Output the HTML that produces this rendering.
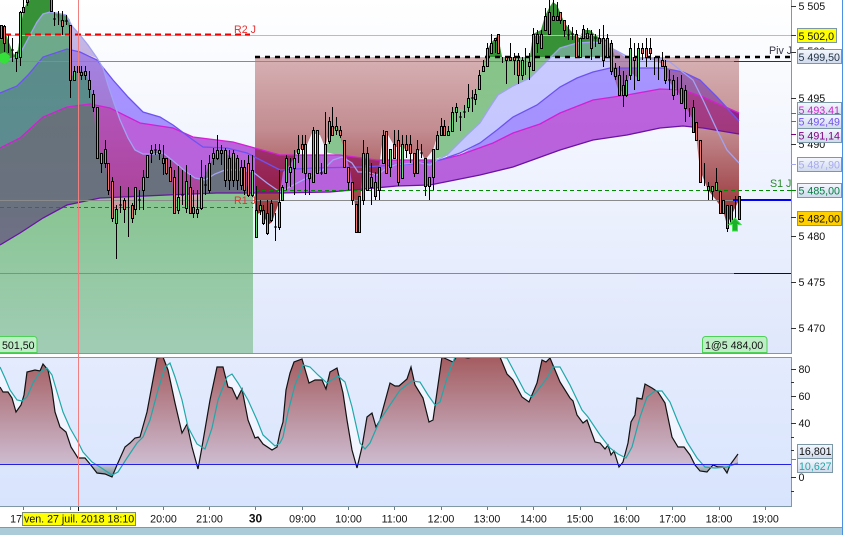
<!DOCTYPE html>
<html><head><meta charset="utf-8"><style>
html,body{margin:0;padding:0;background:#fff;width:843px;height:535px;overflow:hidden}
svg{display:block;position:absolute;left:0;top:0}
text{font-family:"Liberation Sans",sans-serif;font-size:10.67px;fill:#111}
</style></head><body>
<svg width="843" height="535" viewBox="0 0 843 535" xmlns="http://www.w3.org/2000/svg">
<defs>
<linearGradient id="bgM" gradientUnits="userSpaceOnUse" x1="0" y1="0" x2="0" y2="353"><stop offset="0" stop-color="#fff"/><stop offset="1" stop-color="#dfe7fc"/></linearGradient>
<linearGradient id="bgS" gradientUnits="userSpaceOnUse" x1="0" y1="357" x2="0" y2="506"><stop offset="0" stop-color="#e4ebfd"/><stop offset="1" stop-color="#d8e4fd"/></linearGradient>
<linearGradient id="grn" gradientUnits="userSpaceOnUse" x1="0" y1="60" x2="0" y2="353"><stop offset="0" stop-color="#008200" stop-opacity=".46"/><stop offset=".5" stop-color="#008800" stop-opacity=".42"/><stop offset="1" stop-color="#008800" stop-opacity=".28"/></linearGradient>
<linearGradient id="brn" gradientUnits="userSpaceOnUse" x1="0" y1="40" x2="0" y2="235"><stop offset="0" stop-color="#820000" stop-opacity=".22"/><stop offset=".1" stop-color="#820000" stop-opacity=".3"/><stop offset=".46" stop-color="#820000" stop-opacity=".43"/><stop offset=".82" stop-color="#820000" stop-opacity=".72"/><stop offset="1" stop-color="#820000" stop-opacity=".88"/></linearGradient>
<linearGradient id="brnL" gradientUnits="userSpaceOnUse" x1="0" y1="40" x2="0" y2="235"><stop offset="0" stop-color="#900000" stop-opacity=".1"/><stop offset=".5" stop-color="#900000" stop-opacity=".2"/><stop offset=".8" stop-color="#900000" stop-opacity=".3"/><stop offset="1" stop-color="#820000" stop-opacity=".6"/></linearGradient>
<linearGradient id="osc" gradientUnits="userSpaceOnUse" x1="0" y1="357" x2="0" y2="464"><stop offset="0" stop-color="#a45c60"/><stop offset="1" stop-color="#cdbcd0"/></linearGradient>
<linearGradient id="osd" gradientUnits="userSpaceOnUse" x1="0" y1="464" x2="0" y2="477"><stop offset="0" stop-color="#c4ccd6"/><stop offset="1" stop-color="#778490"/></linearGradient>
<linearGradient id="lab" x1="0" y1="0" x2="0" y2="1"><stop offset="0" stop-color="#f4f7fe"/><stop offset="1" stop-color="#cfdaec"/></linearGradient>
<clipPath id="abv"><polygon points="70,0 70,78 78,70 85,72 90,85 93,100 97,150 105,155 108,185 112,205 116,212 124,205 130,205 135,195 140,190 147,165 155,150 163,155 170,170 174,195 182,205 190,205 197,207 201,185 209,165 217,153 225,153 233,158 241,172 248,190 253,195 253,0"/></clipPath>
<clipPath id="pan"><rect x="0" y="357" width="791" height="149"/></clipPath>
<clipPath id="up"><rect x="0" y="357" width="791" height="107"/></clipPath>
<clipPath id="dn"><rect x="0" y="464" width="791" height="42"/></clipPath>
</defs>

<rect x="0" y="0" width="791" height="353" fill="url(#bgM)"/>

<!-- MA fills -->
<polygon fill="#5a5aff" fill-opacity=".3" points="0,60 10,59 17,57 22,50 30,35 37,22 43,14 50,12 57,13 66,15 72,26 80,35 88,45 97,58 80,52 67,49 43,57 28,75 17,86 0,93"/>
<polygon fill="#5a5aff" fill-opacity=".3" points="447,155 457,145 467,135 480,123 490,107 498,95 513,86 530,78 543,65 560,48 577,43 593,42 603,43 615,50 630,58 650,58 660,58 663,68 643,68 610,68 593,72 577,78 560,87 537,105 513,117 497,130 480,143 460,153 447,158"/>
<polygon fill="#552dff" fill-opacity=".5" points="0,93 17,86 28,75 43,57 67,49 80,52 97,60 113,80 128,97 143,112 160,117 173,125 180,130 173,128 140,123 110,108 90,104 67,107 43,117 20,138 0,148"/>
<polygon fill="#552dff" fill-opacity=".5" points="460,155 480,143 497,130 513,117 537,105 560,87 577,78 593,72 610,68 643,68 663,68 683,72 700,80 717,97 739,121 739,113 703,97 683,90 660,89 627,95 593,100 560,113 540,124 513,133 493,143"/>
<polygon fill="#9300c5" fill-opacity=".6" points="0,148 20,138 43,117 67,107 90,104 110,108 140,123 173,128 193,137 233,142 280,155 340,155 377,160 440,160 460,155 493,143 513,133 540,124 560,113 593,100 627,95 660,89 683,90 703,97 739,113 739,134 703,128 683,126 660,128 627,135 593,140 560,150 513,167 480,175 430,185 397,186 330,192 280,193 217,193 167,195 100,198 67,205 43,218 20,233 0,245"/>

<!-- green overlays -->
<polygon fill="url(#grn)" points="0,40 4,28 8,40 14,55 18,50 20,35 23,12 27,2 30,0 50,0 52,10 60,22 66,22 70,30 70,78 78,70 85,72 90,85 93,100 97,150 105,155 108,185 112,205 116,212 124,205 130,205 135,195 140,190 147,165 155,150 163,155 170,170 174,195 182,205 190,205 197,207 201,185 209,165 217,153 225,153 233,158 241,172 248,190 253,195 253,353 0,353"/>
<polygon fill="#006f00" fill-opacity=".6" points="0,60 0,40 4,28 8,40 14,55 18,50 20,35 23,12 27,2 30,0 50,0 52,10 60,22 66,22 70,30 70,20 66,15 57,13 50,12 43,14 37,22 30,35 22,50 17,57 10,59"/>
<polygon fill="url(#grn)" points="433,160 437,137 441,128 448,131 452,113 456,108 464,110 468,98 475,95 479,76 483,66 487,50 491,43 498,35 502,57 530,57 533,34 541,30 545,16 549,8 553,2 557,5 560,12 564,22 570,30 576,36 580,38 583,30 590,30 595,35 600,38 607,40 611,45 615,57 550,57 543,65 530,78 513,86 498,95 490,107 480,123 467,135 457,145 447,155"/>
<polygon fill="#006f00" fill-opacity=".6" points="487,57 487,50 491,43 498,35 502,57 530,57 533,34 541,30 545,16 549,8 553,2 557,5 560,12 564,22 570,30 576,36 580,38 583,30 590,30 595,35 600,38 607,40 603,43 593,42 577,43 560,48 550,57"/>
<polygon fill="url(#grn)" points="325,152 332,127 338,127 343,145 346,157"/>

<!-- brown overlays -->
<polygon clip-path="url(#abv)" fill="url(#brnL)" points="70,20 72,26 80,35 88,45 97,58 103,68 108,85 114,103 120,120 128,138 135,150 143,154 155,154 163,153 172,160 185,171 195,178 205,180 215,174 225,170 240,170 253,172 253,260 70,260"/>
<polygon fill="url(#brn)" points="255,57 486,57 483,66 479,76 475,95 468,98 464,110 456,108 452,113 448,131 441,128 437,137 433,150 425,160 420,150 415,155 402,147 395,147 388,135 383,137 378,175 370,175 363,160 360,210 355,205 350,170 343,145 337,128 330,130 325,147 320,135 312,133 306,147 298,150 290,165 283,172 278,205 272,222 268,225 262,212 255,215"/>
<polygon fill="url(#brn)" points="607,45 615,50 625,57 739,57 739,200 735,208 727,225 723,210 716,200 708,190 700,170 696,135 693,120 685,105 677,90 669,82 662,64 654,60 646,58 640,60 638,78 630,72 626,90 619,92 611,68"/>

<!-- MA lines -->
<g fill="none" stroke-width="1.3">
<polyline stroke="#6a12a6" points="0,245 20,233 43,218 67,205 100,198 167,195 217,193 280,193 330,192 397,186 430,185 480,175 513,167 560,150 593,140 627,135 660,128 683,126 703,128 739,134"/>
<polyline stroke="#d41fd4" points="0,148 20,138 43,117 67,107 90,104 110,108 140,123 173,128 193,137 233,142 280,155 340,155 377,160 440,160 460,155 493,143 513,133 540,124 560,113 593,100 627,95 660,89 683,90 703,97 739,113"/>
<polyline stroke="#6d52f2" points="0,93 17,86 28,75 43,57 67,49 80,52 97,60 113,80 128,97 143,112 160,117 173,125 193,140 203,147 227,148 247,153 280,170 313,168 363,167 397,165 423,163 440,160 460,153 480,143 497,130 513,117 537,105 560,87 577,78 593,72 610,68 643,68 663,68 683,72 700,80 717,97 739,121"/>
<polyline stroke="#a2a2f4" points="0,60 10,59 17,57 22,50 30,35 37,22 43,14 50,12 57,13 66,15 72,26 80,35 88,45 97,58 103,68 108,85 114,103 120,120 128,138 135,150 143,154 155,154 163,153 172,160 185,171 195,178 205,180 215,174 225,170 240,170 253,172 267,183 280,192 303,180 323,170 333,160 342,157 352,163 358,172 367,172 377,175 387,168 395,165 413,163 420,163 430,165 437,160 447,155 457,145 467,135 480,123 490,107 498,95 513,86 530,78 543,65 560,48 577,43 593,42 603,43 615,50 630,58 650,58 660,58 670,62 680,70 693,80 703,100 717,130 727,150 739,163"/>
</g>

<!-- horizontal lines -->
<line x1="0" x2="791" y1="35.5" y2="35.5" stroke="#f2a4a4"/>
<line x1="5" x2="250" y1="34.5" y2="34.5" stroke="#f00000" stroke-width="2" stroke-dasharray="6 4"/>
<line x1="0" x2="791" y1="61.5" y2="61.5" stroke="#8a8a8a"/>
<line x1="734" x2="791" y1="61.5" y2="61.5" stroke="#8b1010"/>
<line x1="255" x2="791" y1="57" y2="57" stroke="#000" stroke-width="2.5" stroke-dasharray="5 5"/>
<line x1="0" x2="791" y1="200.5" y2="200.5" stroke="#8a8a8a"/>
<line x1="255" x2="791" y1="190.5" y2="190.5" stroke="#008a00" stroke-dasharray="4 3"/>
<line x1="0" x2="253" y1="207.5" y2="207.5" stroke="#e02020" stroke-dasharray="4 3"/>
<line x1="0" x2="734" y1="273.5" y2="273.5" stroke="#8a8a8a"/>
<line x1="734" x2="791" y1="273.5" y2="273.5" stroke="#111"/>
<line x1="733" x2="791" y1="200" y2="200" stroke="#0000f0" stroke-width="2"/>

<text x="234" y="33" style="fill:#e83030">R2 J</text>
<text x="234" y="204" style="fill:#e83030">R1 J</text>
<text x="770" y="187" style="fill:#2a8a2a">S1 J</text>
<text x="769" y="54" style="fill:#334">Piv J</text>

<!-- candle wicks -->
<path fill="none" stroke="#000" d="M4.5 25V58M8.5 35V53M12.5 38V62M11 50h3M16.5 52V72M20.5 11V66M23.5 0V12M27.5 0V6M51.5 0V12M54.5 12V26M53 19h3M58.5 11V25M62.5 11V35M66.5 15V25M65 21h3M70.5 25V98M74.5 66V80M78.5 57V75M81.5 66V80M85.5 66V80M89.5 71V98M93.5 90V112M97.5 107V158M101.5 153V173M105.5 140V168M108.5 163V195M112.5 177V222M116.5 205V259M120.5 186V213M119 205h3M124.5 198V223M128.5 187V237M132.5 203V223M135.5 187V215M139.5 190V210M138 200h3M143.5 170V210M147.5 155V177M151.5 145V163M155.5 144V155M154 150h3M159.5 144V160M163.5 145V175M166.5 158V175M170.5 160V181M174.5 170V213M178.5 166V214M182.5 170V205M181 195h3M186.5 165V213M190.5 175V213M193.5 190V218M197.5 190V218M201.5 160V210M205.5 165V195M204 185h3M209.5 155V193M213.5 148V165M217.5 135V160M221.5 145V165M225.5 148V187M229.5 150V190M233.5 150V187M237.5 155V190M241.5 160V190M244.5 160V195M248.5 155V197M252.5 155V197M256.5 186V237M260.5 200V215M263.5 205V225M267.5 200V235M271.5 200V222M275.5 213V241M274 227h3M279.5 170V230M282.5 185V200M286.5 155V190M290.5 158V187M294.5 150V195M298.5 135V163M302.5 135V173M305.5 135V195M309.5 173V195M313.5 127V182M317.5 130V173M321.5 163V175M320 173h3M325.5 112V173M329.5 117V144M332.5 107V135M336.5 117V135M340.5 126V138M344.5 140V167M348.5 167V190M352.5 182V205M363.5 140V205M367.5 147V190M371.5 163V205M375.5 172V200M379.5 167V200M383.5 130V163M386.5 131V173M390.5 149V177M394.5 130V158M398.5 130V186M402.5 135V178M406.5 135V158M410.5 135V163M414.5 153V177M417.5 140V173M421.5 144V158M420 153h3M425.5 158V196M429.5 177V200M433.5 149V190M437.5 131V149M441.5 118V135M444.5 120V135M448.5 126V135M452.5 107V131M456.5 103V122M460.5 112V131M459 117h3M464.5 105V118M463 112h3M468.5 84V112M472.5 90V112M471 98h3M475.5 89V105M479.5 70V89M483.5 60V71M487.5 43V66M491.5 34V53M495.5 38V53M498.5 34V53M502.5 57V63M506.5 57V84M510.5 43V60M514.5 53V75M518.5 53V84M522.5 57V80M525.5 48V75M529.5 53V80M533.5 28V70M537.5 30V53M541.5 30V48M545.5 8V30M549.5 0V34M553.5 0V20M557.5 2V20M560.5 12V24M564.5 20V37M568.5 25V40M567 35h3M572.5 27V40M571 34h3M576.5 30V57M580.5 38V57M583.5 25V38M587.5 28V38M591.5 30V60M595.5 34V47M594 38h3M599.5 29V43M603.5 25V67M607.5 34V57M611.5 40V75M615.5 63V80M619.5 66V95M623.5 71V107M626.5 75V97M630.5 38V80M634.5 43V90M638.5 43V80M642.5 43V60M646.5 38V67M650.5 38V60M654.5 57V75M658.5 57V80M662.5 52V66M665.5 60V84M669.5 70V90M668 80h3M673.5 75V100M677.5 77V95M681.5 75V103M685.5 85V122M689.5 108V117M693.5 100V132M696.5 122V140M700.5 140V182M704.5 163V186M708.5 182V200M712.5 186V200M716.5 168V190M720.5 191V213M723.5 200V213M727.5 205V232M731.5 205V222M735.5 196V222M739.5 196V219"/>
<!-- red bodies -->
<path fill="#f2736e" stroke="#000" d="M.5 25.5h2v13h-2zM3.5 26.5h2v17h-2zM26.5 -.5h2v3h-2zM50.5 -.5h2v12h-2zM61.5 20.5h2v6h-2zM69.5 25.5h2v55h-2zM77.5 66.5h2v6h-2zM80.5 72.5h2v3h-2zM84.5 71.5h2v4h-2zM88.5 80.5h2v9h-2zM92.5 94.5h2v13h-2zM96.5 107.5h2v51h-2zM104.5 149.5h2v14h-2zM107.5 163.5h2v27h-2zM111.5 181.5h2v37h-2zM123.5 200.5h2v9h-2zM131.5 205.5h2v13h-2zM162.5 158.5h2v5h-2zM165.5 158.5h2v15h-2zM169.5 167.5h2v14h-2zM173.5 177.5h2v36h-2zM189.5 187.5h2v26h-2zM192.5 207.5h2v6h-2zM220.5 150.5h2v3h-2zM228.5 158.5h2v22h-2zM236.5 158.5h2v22h-2zM243.5 167.5h2v23h-2zM247.5 163.5h2v32h-2zM262.5 210.5h2v13h-2zM270.5 203.5h2v17h-2zM301.5 144.5h2v5h-2zM308.5 173.5h2v5h-2zM331.5 126.5h2v9h-2zM339.5 130.5h2v5h-2zM343.5 140.5h2v27h-2zM347.5 167.5h2v15h-2zM351.5 182.5h2v18h-2zM355.5 204.5h2v28h-2zM370.5 177.5h2v10h-2zM374.5 182.5h2v14h-2zM385.5 131.5h2v42h-2zM393.5 144.5h2v14h-2zM397.5 140.5h2v42h-2zM405.5 144.5h2v6h-2zM409.5 144.5h2v9h-2zM413.5 153.5h2v20h-2zM424.5 158.5h2v28h-2zM443.5 126.5h2v9h-2zM494.5 38.5h2v2h-2zM497.5 34.5h2v19h-2zM505.5 57.5h2v3h-2zM509.5 57.5h2v3h-2zM513.5 57.5h2v3h-2zM517.5 60.5h2v15h-2zM528.5 62.5h2v4h-2zM536.5 34.5h2v9h-2zM552.5 16.5h2v4h-2zM556.5 16.5h2v4h-2zM559.5 12.5h2v8h-2zM563.5 20.5h2v10h-2zM575.5 34.5h2v23h-2zM586.5 33.5h2v5h-2zM590.5 34.5h2v14h-2zM598.5 38.5h2v5h-2zM610.5 43.5h2v28h-2zM614.5 68.5h2v8h-2zM618.5 75.5h2v20h-2zM622.5 85.5h2v10h-2zM633.5 57.5h2v3h-2zM641.5 48.5h2v5h-2zM645.5 48.5h2v9h-2zM649.5 48.5h2v5h-2zM661.5 60.5h2v6h-2zM664.5 66.5h2v14h-2zM672.5 80.5h2v15h-2zM680.5 88.5h2v15h-2zM684.5 90.5h2v18h-2zM692.5 107.5h2v25h-2zM695.5 122.5h2v18h-2zM699.5 140.5h2v42h-2zM719.5 191.5h2v22h-2zM726.5 205.5h2v23h-2zM738.5 196.5h2v23h-2z"/>
<!-- green bodies -->
<path fill="#5bdc6c" stroke="#000" d="M358.5 196.5h2v36h-2zM15.5 52.5h2v6h-2zM19.5 12.5h2v45h-2zM22.5 7.5h2v5h-2zM73.5 71.5h2v9h-2zM100.5 153.5h2v10h-2zM115.5 209.5h2v14h-2zM134.5 187.5h2v22h-2zM142.5 177.5h2v13h-2zM146.5 155.5h2v22h-2zM150.5 150.5h2v3h-2zM158.5 150.5h2v3h-2zM177.5 197.5h2v13h-2zM185.5 181.5h2v27h-2zM196.5 209.5h2v4h-2zM200.5 177.5h2v31h-2zM208.5 163.5h2v27h-2zM212.5 153.5h2v5h-2zM216.5 150.5h2v8h-2zM224.5 150.5h2v30h-2zM232.5 153.5h2v27h-2zM240.5 167.5h2v18h-2zM251.5 170.5h2v25h-2zM255.5 210.5h2v27h-2zM259.5 205.5h2v5h-2zM266.5 213.5h2v20h-2zM278.5 202.5h2v25h-2zM281.5 187.5h2v13h-2zM285.5 158.5h2v24h-2zM289.5 167.5h2v5h-2zM293.5 158.5h2v10h-2zM297.5 149.5h2v4h-2zM304.5 144.5h2v29h-2zM312.5 130.5h2v52h-2zM316.5 130.5h2v43h-2zM324.5 144.5h2v29h-2zM328.5 121.5h2v20h-2zM335.5 126.5h2v4h-2zM362.5 153.5h2v47h-2zM366.5 153.5h2v37h-2zM378.5 167.5h2v23h-2zM382.5 135.5h2v28h-2zM389.5 149.5h2v18h-2zM401.5 144.5h2v34h-2zM416.5 149.5h2v24h-2zM428.5 177.5h2v9h-2zM432.5 149.5h2v28h-2zM436.5 135.5h2v14h-2zM440.5 126.5h2v9h-2zM447.5 131.5h2v4h-2zM451.5 112.5h2v19h-2zM455.5 107.5h2v5h-2zM467.5 98.5h2v9h-2zM474.5 94.5h2v5h-2zM478.5 75.5h2v14h-2zM482.5 66.5h2v5h-2zM486.5 48.5h2v18h-2zM490.5 43.5h2v10h-2zM521.5 60.5h2v15h-2zM532.5 34.5h2v36h-2zM540.5 34.5h2v14h-2zM544.5 16.5h2v14h-2zM548.5 12.5h2v22h-2zM579.5 38.5h2v19h-2zM582.5 29.5h2v9h-2zM602.5 38.5h2v22h-2zM606.5 38.5h2v19h-2zM625.5 80.5h2v15h-2zM629.5 48.5h2v27h-2zM637.5 48.5h2v32h-2zM707.5 186.5h2v4h-2zM711.5 186.5h2v5h-2zM715.5 182.5h2v8h-2zM722.5 200.5h2v13h-2zM730.5 205.5h2v17h-2z"/>

<!-- arrows -->
<polygon fill="#1fae2c" stroke="#3fe24a" points="735,218 741,224.5 737.5,224.5 737.5,231 732.5,231 732.5,224.5 729,224.5"/>
<polygon fill="#35e03a" points="0,54 5,52 10,56 9,61 5,64 0,62"/>

<!-- main frame -->
<rect x="0" y="353" width="792" height="1" fill="#7f9aa5"/>
<rect x="791" y="0" width="1" height="354" fill="#7f9aa5"/>

<!-- labels on chart -->
<path d="M-2 336.5H34a3 3 0 0 1 3 3V352.5H-2z" fill="#bdeec6" stroke="#4fd058"/>
<text x="2" y="349">501,50</text>
<path d="M705.5 336.5H764a3 3 0 0 1 3 3V352.5H702.5V339.5a3 3 0 0 1 3-3z" fill="#bdeec6" stroke="#4fd058"/>
<text x="705" y="349">1@5 484,00</text>

<!-- sub panel -->
<rect x="0" y="357" width="791" height="149" fill="url(#bgS)"/>
<g clip-path="url(#pan)">
<polygon clip-path="url(#up)" fill="#f4f6ff" fill-opacity=".9" points="0,367 5,378 10,390 17,400 22,401 27,397 33,383 40,372 47,368 52,375 57,392 63,412 70,428 78,442 83,452 92,462 100,467 112,475 118,472 127,458 137,443 143,437 150,420 158,390 165,367 170,363 175,377 182,400 188,427 197,444 205,449 212,428 218,400 227,377 232,374 238,383 248,400 257,420 263,435 275,446 280,443 283,437 288,412 295,385 303,365 310,367 318,375 327,383 338,376 345,382 352,407 360,443 365,449 370,443 380,420 390,405 400,390 412,381 420,382 428,395 435,405 440,402 447,378 455,357 500,357 507,358 515,373 525,392 532,397 538,390 547,378 553,367 560,367 570,385 582,410 588,417 600,435 610,448 618,454 626,458 632,447 640,417 647,397 655,391 662,391 670,402 678,422 687,442 697,458 705,467 715,468 727,467 738,463 738,464 0,464"/>
<polygon clip-path="url(#up)" fill="url(#osc)" points="0,387 3,392 8,392 12,398 16,412 21,405 24,395 27,372 35,370 40,371 43,364 48,370 52,390 55,412 60,427 66,432 71,447 78,458 85,458 90,464 97,473 105,474 112,477 117,465 125,447 130,443 135,438 140,437 147,412 152,385 157,358 163,357 168,370 175,403 182,433 187,424 192,447 198,469 202,447 210,400 217,367 223,367 228,387 232,388 237,399 242,389 248,420 255,438 258,437 263,444 272,450 277,447 280,432 283,422 286,390 290,373 294,362 302,359 309,383 315,380 322,380 326,389 330,372 337,368 343,393 347,420 352,450 357,468 362,447 367,417 372,413 376,427 380,420 390,383 395,386 399,386 407,379 411,367 415,385 423,398 429,422 433,420 442,357 453,362 457,356 468,358 477,356 500,357 507,374 513,380 522,397 529,402 537,383 542,360 546,362 550,358 560,382 570,398 573,401 577,415 583,423 587,420 595,442 600,443 605,449 608,445 611,455 614,451 619,467 623,462 628,443 631,422 635,415 637,398 642,399 645,384 652,388 658,392 665,403 672,437 678,447 684,447 690,455 695,465 700,471 707,472 713,465 718,467 723,467 727,473 730,465 738,454 738,464 0,464"/>
<polygon clip-path="url(#dn)" fill="url(#osd)" points="90,464 97,473 105,474 112,477 117,465 117,464"/>
<polygon clip-path="url(#dn)" fill="url(#osd)" points="695,464 700,471 707,472 713,465 718,467 723,467 727,473 730,465 731,464"/>
<polyline fill="none" stroke="#111" stroke-width="1.2" points="0,387 3,392 8,392 12,398 16,412 21,405 24,395 27,372 35,370 40,371 43,364 48,370 52,390 55,412 60,427 66,432 71,447 78,458 85,458 90,464 97,473 105,474 112,477 117,465 125,447 130,443 135,438 140,437 147,412 152,385 157,358 163,357 168,370 175,403 182,433 187,424 192,447 198,469 202,447 210,400 217,367 223,367 228,387 232,388 237,399 242,389 248,420 255,438 258,437 263,444 272,450 277,447 280,432 283,422 286,390 290,373 294,362 302,359 309,383 315,380 322,380 326,389 330,372 337,368 343,393 347,420 352,450 357,468 362,447 367,417 372,413 376,427 380,420 390,383 395,386 399,386 407,379 411,367 415,385 423,398 429,422 433,420 442,357 453,362 457,356 468,358 477,356 500,357 507,374 513,380 522,397 529,402 537,383 542,360 546,362 550,358 560,382 570,398 573,401 577,415 583,423 587,420 595,442 600,443 605,449 608,445 611,455 614,451 619,467 623,462 628,443 631,422 635,415 637,398 642,399 645,384 652,388 658,392 665,403 672,437 678,447 684,447 690,455 695,465 700,471 707,472 713,465 718,467 723,467 727,473 730,465 738,454"/>
<polyline fill="none" stroke="#1fa8a8" stroke-width="1.2" points="0,367 5,378 10,390 17,400 22,401 27,397 33,383 40,372 47,368 52,375 57,392 63,412 70,428 78,442 83,452 92,462 100,467 112,475 118,472 127,458 137,443 143,437 150,420 158,390 165,367 170,363 175,377 182,400 188,427 197,444 205,449 212,428 218,400 227,377 232,374 238,383 248,400 257,420 263,435 275,446 280,443 283,437 288,412 295,385 303,365 310,367 318,375 327,383 338,376 345,382 352,407 360,443 365,449 370,443 380,420 390,405 400,390 412,381 420,382 428,395 435,405 440,402 447,378 455,357 500,357 507,358 515,373 525,392 532,397 538,390 547,378 553,367 560,367 570,385 582,410 588,417 600,435 610,448 618,454 626,458 632,447 640,417 647,397 655,391 662,391 670,402 678,422 687,442 697,458 705,467 715,468 727,467 738,463"/>
</g>
<line x1="0" x2="791" y1="464.5" y2="464.5" stroke="#2222e0"/>
<rect x="0" y="357" width="792" height="1" fill="#7f9aa5"/>
<rect x="0" y="506" width="792" height="1" fill="#7f9aa5"/>
<rect x="791" y="357" width="1" height="150" fill="#7f9aa5"/>

<!-- vertical crosshair -->
<line x1="78.5" x2="78.5" y1="0" y2="506" stroke="#f08080"/>

<!-- price axis ticks -->
<path fill="none" stroke="#333" d="M791 6.5h5M791 35.5h5M791 52.5h5M791 98.5h5M791 144.5h5M791 217.5h5M791 236.5h5M791 282.5h5M791 328.5h5M791 369.5h5M791 382.5h3M791 396.5h5M791 409.5h3M791 423.5h5M791 437.5h3M791 450.5h3M791 477.5h5M791 491.5h3"/>
<path fill="none" d="M791 113.5h5" stroke="#d020d0"/>
<path fill="none" d="M791 121.5h5" stroke="#7050f0"/>
<path fill="none" d="M791 134.5h5" stroke="#800080"/>
<path fill="none" d="M791 164.5h5" stroke="#a8a8f0"/>
<path fill="none" d="M791 190.5h5" stroke="#008a00"/>
<path fill="none" d="M791 459.5h5" stroke="#1fa8a8"/>

<text x="798.5" y="10">5 505</text>
<text x="798.5" y="55">5 500</text>
<text x="798.5" y="102">5 495</text>
<text x="798.5" y="148">5 490</text>
<text x="798.5" y="240">5 480</text>
<text x="798.5" y="286">5 475</text>
<text x="798.5" y="332">5 470</text>
<text x="798.5" y="373">80</text>
<text x="798.5" y="400">60</text>
<text x="798.5" y="427">40</text>
<text x="798.5" y="481">0</text>

<!-- price label boxes -->
<g stroke="#7c98a6">
<rect x="797.5" y="28.5" width="39" height="14" fill="#ffff00"/>
<rect x="797.5" y="49.5" width="44" height="14" fill="url(#lab)"/>
<rect x="797.5" y="102.5" width="44" height="14" fill="url(#lab)"/>
<rect x="797.5" y="128.5" width="44" height="14" fill="url(#lab)"/>
<rect x="797.5" y="157.5" width="44" height="14" fill="url(#lab)"/>
<rect x="797.5" y="183.5" width="44" height="14" fill="url(#lab)"/>
<rect x="797.5" y="211.5" width="44" height="14" fill="#ffcf00"/>
<rect x="797.5" y="444.5" width="35" height="14" fill="url(#lab)"/>
<rect x="797.5" y="458.5" width="35" height="14" fill="url(#lab)"/>
</g>
<text x="798.5" y="40">5 502,0</text>
<text x="798.5" y="61" style="fill:#223344">5 499,50</text>
<text x="798.5" y="114" style="fill:#d020d0">5 493,41</text>
<rect x="797.5" y="114.5" width="44" height="14" fill="url(#lab)" stroke="#7c98a6"/>
<text x="798.5" y="125.5" style="fill:#7050f0">5 492,49</text>
<text x="798.5" y="139.5" style="fill:#800080">5 491,14</text>
<text x="798.5" y="168.5" style="fill:#a8a8f0">5 487,90</text>
<text x="798.5" y="194.5" style="fill:#008040">5 485,00</text>
<text x="798.5" y="222.5">5 482,00</text>
<text x="799" y="455">16,801</text>
<text x="799" y="470" style="fill:#1fa8a8">10,627</text>

<!-- time axis -->
<path fill="none" stroke="#6a7c86" d="M23.5 507v3M70.5 507v3M116.5 507v3M163.5 507v3M209.5 507v3M255.5 507v3M302.5 507v3M348.5 507v3M394.5 507v3M441.5 507v3M487.5 507v3M533.5 507v3M580.5 507v3M626.5 507v3M672.5 507v3M719.5 507v3M765.5 507v3"/>
<path fill="none" stroke="#111" d="M78.5 507v4"/>
<g text-anchor="middle">
<text x="23.5" y="522.5">17:00</text>
<text x="163.5" y="522.5">20:00</text>
<text x="209.5" y="522.5">21:00</text>
<text x="255.5" y="522.5" style="font-weight:bold;font-size:12px">30</text>
<text x="302.5" y="522.5">09:00</text>
<text x="348.5" y="522.5">10:00</text>
<text x="394.5" y="522.5">11:00</text>
<text x="441" y="522.5">12:00</text>
<text x="487" y="522.5">13:00</text>
<text x="533.5" y="522.5">14:00</text>
<text x="580" y="522.5">15:00</text>
<text x="626.5" y="522.5">16:00</text>
<text x="672.5" y="522.5">17:00</text>
<text x="719" y="522.5">18:00</text>
<text x="765.5" y="522.5">19:00</text>
</g>
<rect x="22.5" y="512.5" width="113" height="13" fill="#ffff00" stroke="#7c8a70"/>
<text x="24" y="522.5">ven. 27 juil. 2018 18:10</text>

<!-- bottom strip & right edge -->
<rect x="0" y="527" width="843" height="1" fill="#7f9aa5"/>
<rect x="0" y="528" width="843" height="7" fill="#aacbd7"/>
<rect x="842" y="0" width="1" height="535" fill="#4a90e4"/>
</svg>
</body></html>
